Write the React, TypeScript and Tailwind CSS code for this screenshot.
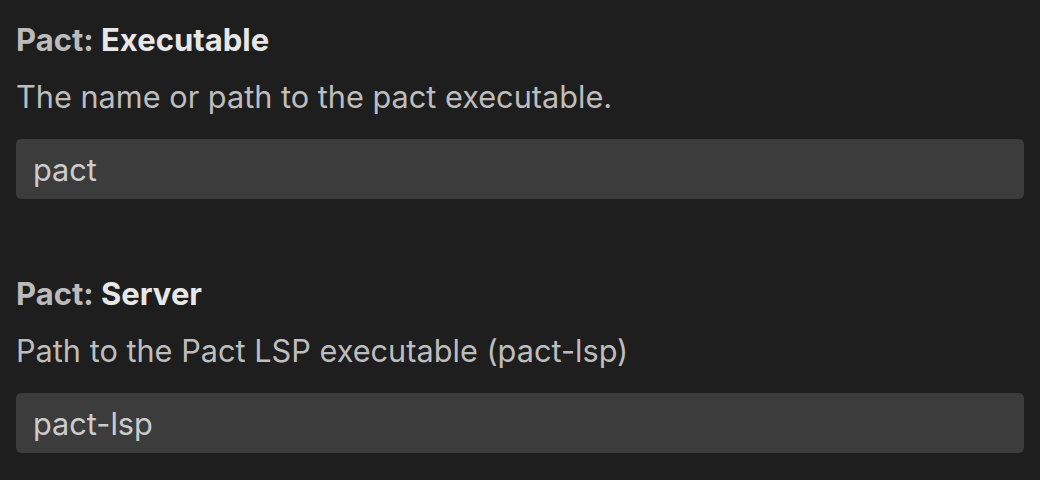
import { FC } from "react"

type SettingProps = {
  category: string
  name: string
  description: string
  value: string
}

const Setting: FC<SettingProps> = ({ category, name, description, value }) => {
  return (
    <div className="flex flex-col">
      <div className="text-[31px] leading-[36px] font-bold">
        <span className="text-[#bbbbbb]">{category}: </span>
        <span className="text-[#e7e7e7]">{name}</span>
      </div>
      <div className="mt-[21px] text-[30.7px] leading-[36px] text-[#bdbdbd]">{description}</div>
      <input
        className="mt-[24px] h-[60px] w-full rounded-[5px] bg-[#3c3c3c] px-[17px] text-[30.7px] text-[#cccccc] outline-none"
        defaultValue={value}
        spellCheck={false}
      />
    </div>
  )
}

export default function App() {
  return (
    <div
      className="flex h-[480px] w-[1040px] flex-col gap-[77px] overflow-hidden bg-[#1e1e1e] pl-[16px] pr-[16px] pt-[22px]"
      style={{ fontFamily: "Inter, 'Noto Sans', sans-serif" }}
    >
      <Setting
        category="Pact"
        name="Executable"
        description="The name or path to the pact executable."
        value="pact"
      />
      <Setting
        category="Pact"
        name="Server"
        description="Path to the Pact LSP executable (pact-lsp)"
        value="pact-lsp"
      />
    </div>
  )
}
